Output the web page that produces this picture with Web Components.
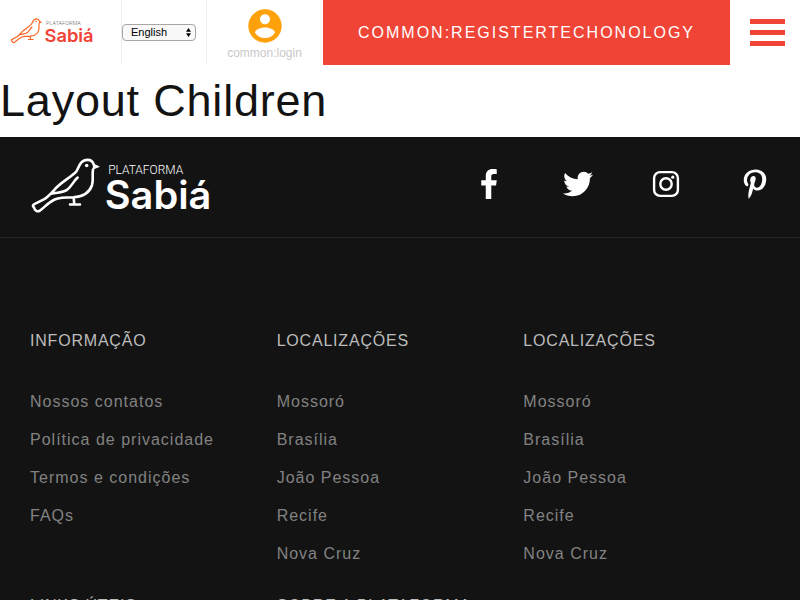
<!DOCTYPE html>
<html lang="pt">
<head>
<meta charset="utf-8">
<title>Plataforma Sabiá</title>
<style>
html{background:#fff}
body{margin:0;height:600px;overflow:hidden;font-family:"Liberation Sans",Arial,sans-serif;font-size:16px;line-height:1.6;letter-spacing:1px;color:#131313}
</style>
</head>
<body>
<sabia-layout>Layout Children</sabia-layout>
<script>
const define = (name, html) => customElements.define(name, class extends HTMLElement {
  constructor() {
    super();
    const t = document.createElement('template');
    t.innerHTML = html;
    this.attachShadow({mode: 'open'}).append(t.content.cloneNode(true));
  }
});

define('sabia-logo', `
<style>
:host{display:block;letter-spacing:0}
svg{display:block;width:100%;height:100%;overflow:visible}
.bird{fill:none;stroke:var(--bird,#fff);stroke-width:7.8;stroke-linejoin:round;stroke-linecap:round}
.eye,.beak{fill:var(--bird,#fff)}
.small{font:300 12px Roboto,sans-serif;fill:var(--small,#fff)}
.name{font:600 39px Inter,sans-serif;fill:var(--name,#fff)}
</style>
<svg viewBox="32 158 178 54">
  <g transform="translate(20 145.2) scale(.33333)">
    <path class="bird" d="M219 73C216 92 221 104 216 120C208 143 186 155 160 156C137 156 120 156 104 163C84 172 72 188 60 196C52 201 44 196 42 187C37 183 38 179 43 177L73 162C85 154 94 144 103 134C121 112 148 100 168 80C177 70 178 44 203 44C213 44 219 50 221 58M93 146C112 141 128 143 141 134C155 124 160 108 173 97M161 157L163 178M150 178H180"/>
    <path class="beak" d="M219 54L240 65L218 74Z"/>
    <circle class="eye" cx="200" cy="61" r="5.4"/>
  </g>
  <text class="small" x="108.2" y="174" textLength="75" lengthAdjust="spacingAndGlyphs">PLATAFORMA</text>
  <text class="name" x="104.8" y="209" textLength="106.6" lengthAdjust="spacingAndGlyphs">Sabiá</text>
</svg>`);

define('language-select', `
<style>
:host{display:flex;align-items:center;justify-content:space-between;box-sizing:border-box;width:74px;height:17px;padding:0 4px 0 8px;border:1px solid #a6a6a6;border-radius:4px;background:#f8f8f8;color:#000;font-size:11px;line-height:15px;letter-spacing:0}
svg{display:block}
</style>
<slot></slot>
<svg width="5" height="9" viewBox="0 0 5 9"><path d="M0 3.8L2.5 0L5 3.8ZM0 5.2H5L2.5 9Z"/></svg>`);

define('login-link', `
<style>
:host{display:flex;flex-direction:column;align-items:center;color:#c8c8c8;font-size:12px;line-height:19px;letter-spacing:0}
svg{display:block;width:40px;height:40px;fill:#ffa10a;margin:0 0 -2px 2px}
</style>
<svg viewBox="0 0 24 24"><path d="M12 2C6.48 2 2 6.48 2 12s4.48 10 10 10 10-4.48 10-10S17.52 2 12 2zm0 3c1.66 0 3 1.34 3 3s-1.34 3-3 3-3-1.34-3-3 1.34-3 3-3zm0 14.2c-2.5 0-4.71-1.28-6-3.22.03-1.99 4-3.08 6-3.08 1.99 0 5.97 1.09 6 3.08-1.29 1.94-3.5 3.22-6 3.22z"/></svg>
<slot></slot>`);

define('menu-button', `
<style>
:host{display:flex;flex-direction:column;gap:6px}
i{width:35px;height:5px;background:#f04437}
</style><i></i><i></i><i></i>`);

define('page-header', `
<style>
:host{display:grid;grid-template-columns:122px 85px 116px 407px 70px;height:65px;background:#fff}
div{box-sizing:border-box;display:flex;align-items:center;justify-content:center}
.line{border-right:1px solid #ececec}
.brand{justify-content:start;padding:0 0 5px 11px}
.lang{justify-content:start}
.login{align-items:start;padding-top:6px;padding-right:1px}
.cta{background:#f04437;color:#fff;letter-spacing:2px}
.menu{justify-content:start;padding-left:20px}
sabia-logo{width:82px;height:25px;--bird:#fb6525;--small:#666;--name:#f04437}
</style>
<div class="line brand"><sabia-logo></sabia-logo></div>
<div class="line lang"><language-select>English</language-select></div>
<div class="login"><login-link>common:login</login-link></div>
<div class="cta">COMMON:REGISTERTECHONOLOGY</div>
<div class="menu"><menu-button></menu-button></div>`);

define('social-links', `
<style>
:host{display:flex;justify-content:space-between;width:296px}
svg{display:block;width:30px;height:30px;fill:#fff}
</style>
<svg viewBox="0 0 264 512"><path d="M76.7 512V283H0v-91h76.7v-71.7C76.7 42.4 124.3 0 193.8 0c33.3 0 61.9 2.5 70.2 3.6V85h-48.2c-37.8 0-45.1 18-45.1 44.3V192H264l-11.7 91h-81.6v229"/></svg>
<svg viewBox="0 0 512 512"><path d="M459.37 151.716c.325 4.548.325 9.097.325 13.645 0 138.72-105.583 298.558-298.558 298.558-59.452 0-114.68-17.219-161.137-47.106 8.447.974 16.568 1.299 25.34 1.299 49.055 0 94.213-16.568 130.274-44.832-46.132-.975-84.792-31.188-98.112-72.772 6.498.974 12.995 1.624 19.818 1.624 9.421 0 18.843-1.3 27.614-3.573-48.081-9.747-84.143-51.98-84.143-102.985v-1.299c13.969 7.797 30.214 12.67 47.431 13.319-28.264-18.843-46.781-51.005-46.781-87.391 0-19.492 5.197-37.36 14.294-52.954 51.655 63.675 129.3 105.258 216.365 109.807-1.624-7.797-2.599-15.918-2.599-24.04 0-57.828 46.782-104.934 104.934-104.934 30.213 0 57.502 12.67 76.67 33.137 23.715-4.548 46.456-13.32 66.599-25.34-7.798 24.366-24.366 44.833-46.132 57.827 21.117-2.273 41.584-8.122 60.426-16.243-14.292 20.791-32.161 39.308-52.628 54.253z"/></svg>
<svg viewBox="0 0 30 30"><g fill="none" stroke="#fff" stroke-width="2.4"><rect x="3.1" y="3.1" width="23.8" height="23.8" rx="6"/><circle cx="15" cy="15" r="5.7"/></g><circle cx="21.8" cy="8.2" r="1.6"/></svg>
<svg viewBox="0 0 384 512"><path d="M204 6.5C101.4 6.5 0 74.9 0 185.6 0 256 39.6 296 63.6 296c9.9 0 15.6-27.6 15.6-35.4 0-9.3-23.7-29.1-23.7-67.8 0-80.4 61.2-137.4 140.4-137.4 68.1 0 118.5 38.7 118.5 109.8 0 53.1-21.3 152.7-90.3 152.7-24.9 0-46.2-18-46.2-43.8 0-37.8 26.4-74.4 26.4-113.4 0-66.2-93.9-54.2-93.9 25.8 0 16.8 2.1 35.4 9.6 50.7-13.8 59.4-42 147.9-42 209.1 0 18.9 2.7 37.5 4.5 56.4 3.4 3.8 1.7 3.4 6.9 1.5 50.4-69 48.6-82.5 71.4-172.8 12.3 23.4 44.1 36 69.3 36 106.2 0 153.9-103.5 153.9-196.8C384 71.3 298.2 6.5 204 6.5z"/></svg>`);

define('link-column', `
<style>
:host{display:block;height:265px;color:#828282}
h4{margin:0 0 35px;font-size:16px;line-height:26px;font-weight:400;color:#bcbcbc}
nav{display:flex;flex-direction:column;gap:12px;line-height:26px}
</style>
<h4><slot name="title"></slot></h4><nav><slot></slot></nav>`);

const column = (title, links) =>
  `<link-column><span slot="title">${title}</span>${links.map(l => `<span>${l}</span>`).join('')}</link-column>`;
const places = ['Mossoró', 'Brasília', 'João Pessoa', 'Recife', 'Nova Cruz'];

define('page-footer', `
<style>
:host{display:block;background:#131313;height:463px;overflow:hidden}
.top{box-sizing:border-box;height:101px;padding:0 30px;display:flex;align-items:center;justify-content:space-between;border-bottom:1px solid #252525}
sabia-logo{width:178px;height:54px;margin:-4px 0 0 2px}
social-links{margin-top:-6px}
.columns{display:grid;grid-template-columns:repeat(3,1fr);padding:90px 30px 0;letter-spacing:1px}
link-column span[slot]{letter-spacing:.8px}
</style>
<div class="top"><sabia-logo></sabia-logo><social-links></social-links></div>
<div class="columns">
${column('INFORMAÇÃO', ['Nossos contatos', 'Política de privacidade', 'Termos e condições', 'FAQs'])}
${column('LOCALIZAÇÕES', places)}
${column('LOCALIZAÇÕES', places)}
${column('LINKS ÚTEIS', [])}
${column('SOBRE A PLATAFORMA', [])}
</div>`);

define('sabia-layout', `
<style>
:host{display:block}
h1{margin:0;font-size:45px;line-height:72px;font-weight:400;letter-spacing:.8px}
</style>
<page-header></page-header>
<h1><slot></slot></h1>
<page-footer></page-footer>`);
</script>
</body>
</html>
